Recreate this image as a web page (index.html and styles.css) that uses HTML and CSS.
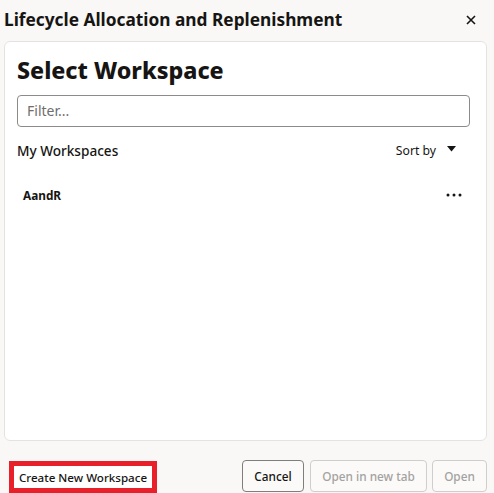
FILE: index.html
```html
<!DOCTYPE html>
<html lang="en">
<head>
<meta charset="utf-8">
<title>Select Workspace</title>
<link rel="stylesheet" href="styles.css">
</head>
<body>
<div class="dialog">
  <header class="dialog-header">
    <h1 class="dialog-title">Lifecycle Allocation and Replenishment</h1>
    <button class="close-btn" aria-label="Close">
      <svg width="10" height="10" viewBox="0 0 10 10"><path d="M1 1L9 9M9 1L1 9" stroke="#161513" stroke-width="1.6" fill="none"/></svg>
    </button>
  </header>
  <main class="card">
    <h2 class="card-title">Select Workspace</h2>
    <input class="filter" type="text" placeholder="Filter...">
    <div class="list-head">
      <span class="list-label">My Workspaces</span>
      <span class="sort">Sort by
        <svg class="caret" width="9" height="6" viewBox="0 0 9 6"><path d="M0 0H9L4.5 5.5Z" fill="#161513"/></svg>
      </span>
    </div>
    <div class="row">
      <span class="row-name">AandR</span>
      <svg class="more" width="16" height="4" viewBox="0 0 16 4"><circle cx="2" cy="2" r="1.5" fill="#161513"/><circle cx="8" cy="2" r="1.5" fill="#161513"/><circle cx="14" cy="2" r="1.5" fill="#161513"/></svg>
    </div>
  </main>
  <footer class="dialog-footer">
    <button class="btn btn-create">Create New Workspace</button>
    <div class="spacer"></div>
    <button class="btn btn-outline btn-cancel">Cancel</button>
    <button class="btn btn-outline disabled btn-newtab">Open in new tab</button>
    <button class="btn btn-outline disabled btn-open">Open</button>
  </footer>
</div>
</body>
</html>
```
FILE: styles.css
```css
* { box-sizing: border-box; }
html, body { margin: 0; padding: 0; }
body {
  background: #f9f8f6;
  font-family: "Noto Sans", "Open Sans", sans-serif;
  color: #161513;
  width: 494px;
  height: 493px;
  overflow: hidden;
}
.dialog {
  display: flex;
  flex-direction: column;
  height: 493px;
}
.dialog-header {
  display: flex;
  align-items: center;
  justify-content: space-between;
  height: 40px;
  padding: 0 16px 0 4px;
}
.dialog-title {
  margin: 0;
  font-size: 17.3px;
  font-weight: 700;
  line-height: 36px;
}
.close-btn {
  border: none;
  background: none;
  padding: 0;
  width: 14px;
  height: 14px;
  display: flex;
  align-items: center;
  justify-content: center;
}
.card {
  margin: 1px 7px 0 4px;
  height: 401px;
  background: #fff;
  border: 1px solid #e4e3e1;
  border-radius: 6px;
  padding: 12px 16px 0 12px;
  display: flex;
  flex-direction: column;
}
.card-title {
  margin: 0;
  font-size: 23.2px;
  font-weight: 800;
  line-height: 33px;
}
.filter {
  margin-top: 8px;
  height: 32px;
  border: 1px solid #8c8b89;
  border-radius: 4px;
  padding: 0 9px;
  font-family: inherit;
  font-size: 14px;
  color: #161513;
  width: 100%;
}
.filter::placeholder { color: #6f6e6c; }
.list-head {
  display: flex;
  justify-content: space-between;
  align-items: center;
  margin-top: 14px;
  height: 20px;
}
.list-label {
  font-size: 13.6px;
  font-weight: 500;
}
.sort {
  display: flex;
  align-items: center;
  font-size: 12.2px;
  gap: 11px;
  padding-right: 14px;
}
.caret { margin-top: -3px; }
.row {
  display: flex;
  justify-content: space-between;
  align-items: center;
  margin-top: 25px;
  padding-left: 6px;
  padding-right: 8px;
  height: 18px;
}
.row-name {
  font-size: 11.8px;
  font-weight: 700;
}
.dialog-footer {
  display: flex;
  align-items: flex-start;
  padding: 19px 7px 0 9px;
  gap: 5px;
}
.spacer { flex: 1; }
.btn {
  font-family: inherit;
  height: 32px;
  font-size: 11.8px;
  font-weight: 500;
  background: #fff;
  color: #161513;
  border-radius: 4px;
  padding: 0;
  white-space: nowrap;
}
.btn-create {
  border: 5px solid #e8202a;
  border-radius: 0;
  margin-top: 1px;
  width: 148px;
  font-size: 11.6px;
}
.btn-outline {
  border: 1px solid #7f7e7c;
  background: #fbfaf8;
}
.btn-cancel { width: 62px; margin-right: 1px; }
.btn-newtab { width: 117px; }
.btn-open { width: 55px; }
.btn-outline.disabled {
  color: #a3a2a0;
  border-color: #cfcecc;
}
```
